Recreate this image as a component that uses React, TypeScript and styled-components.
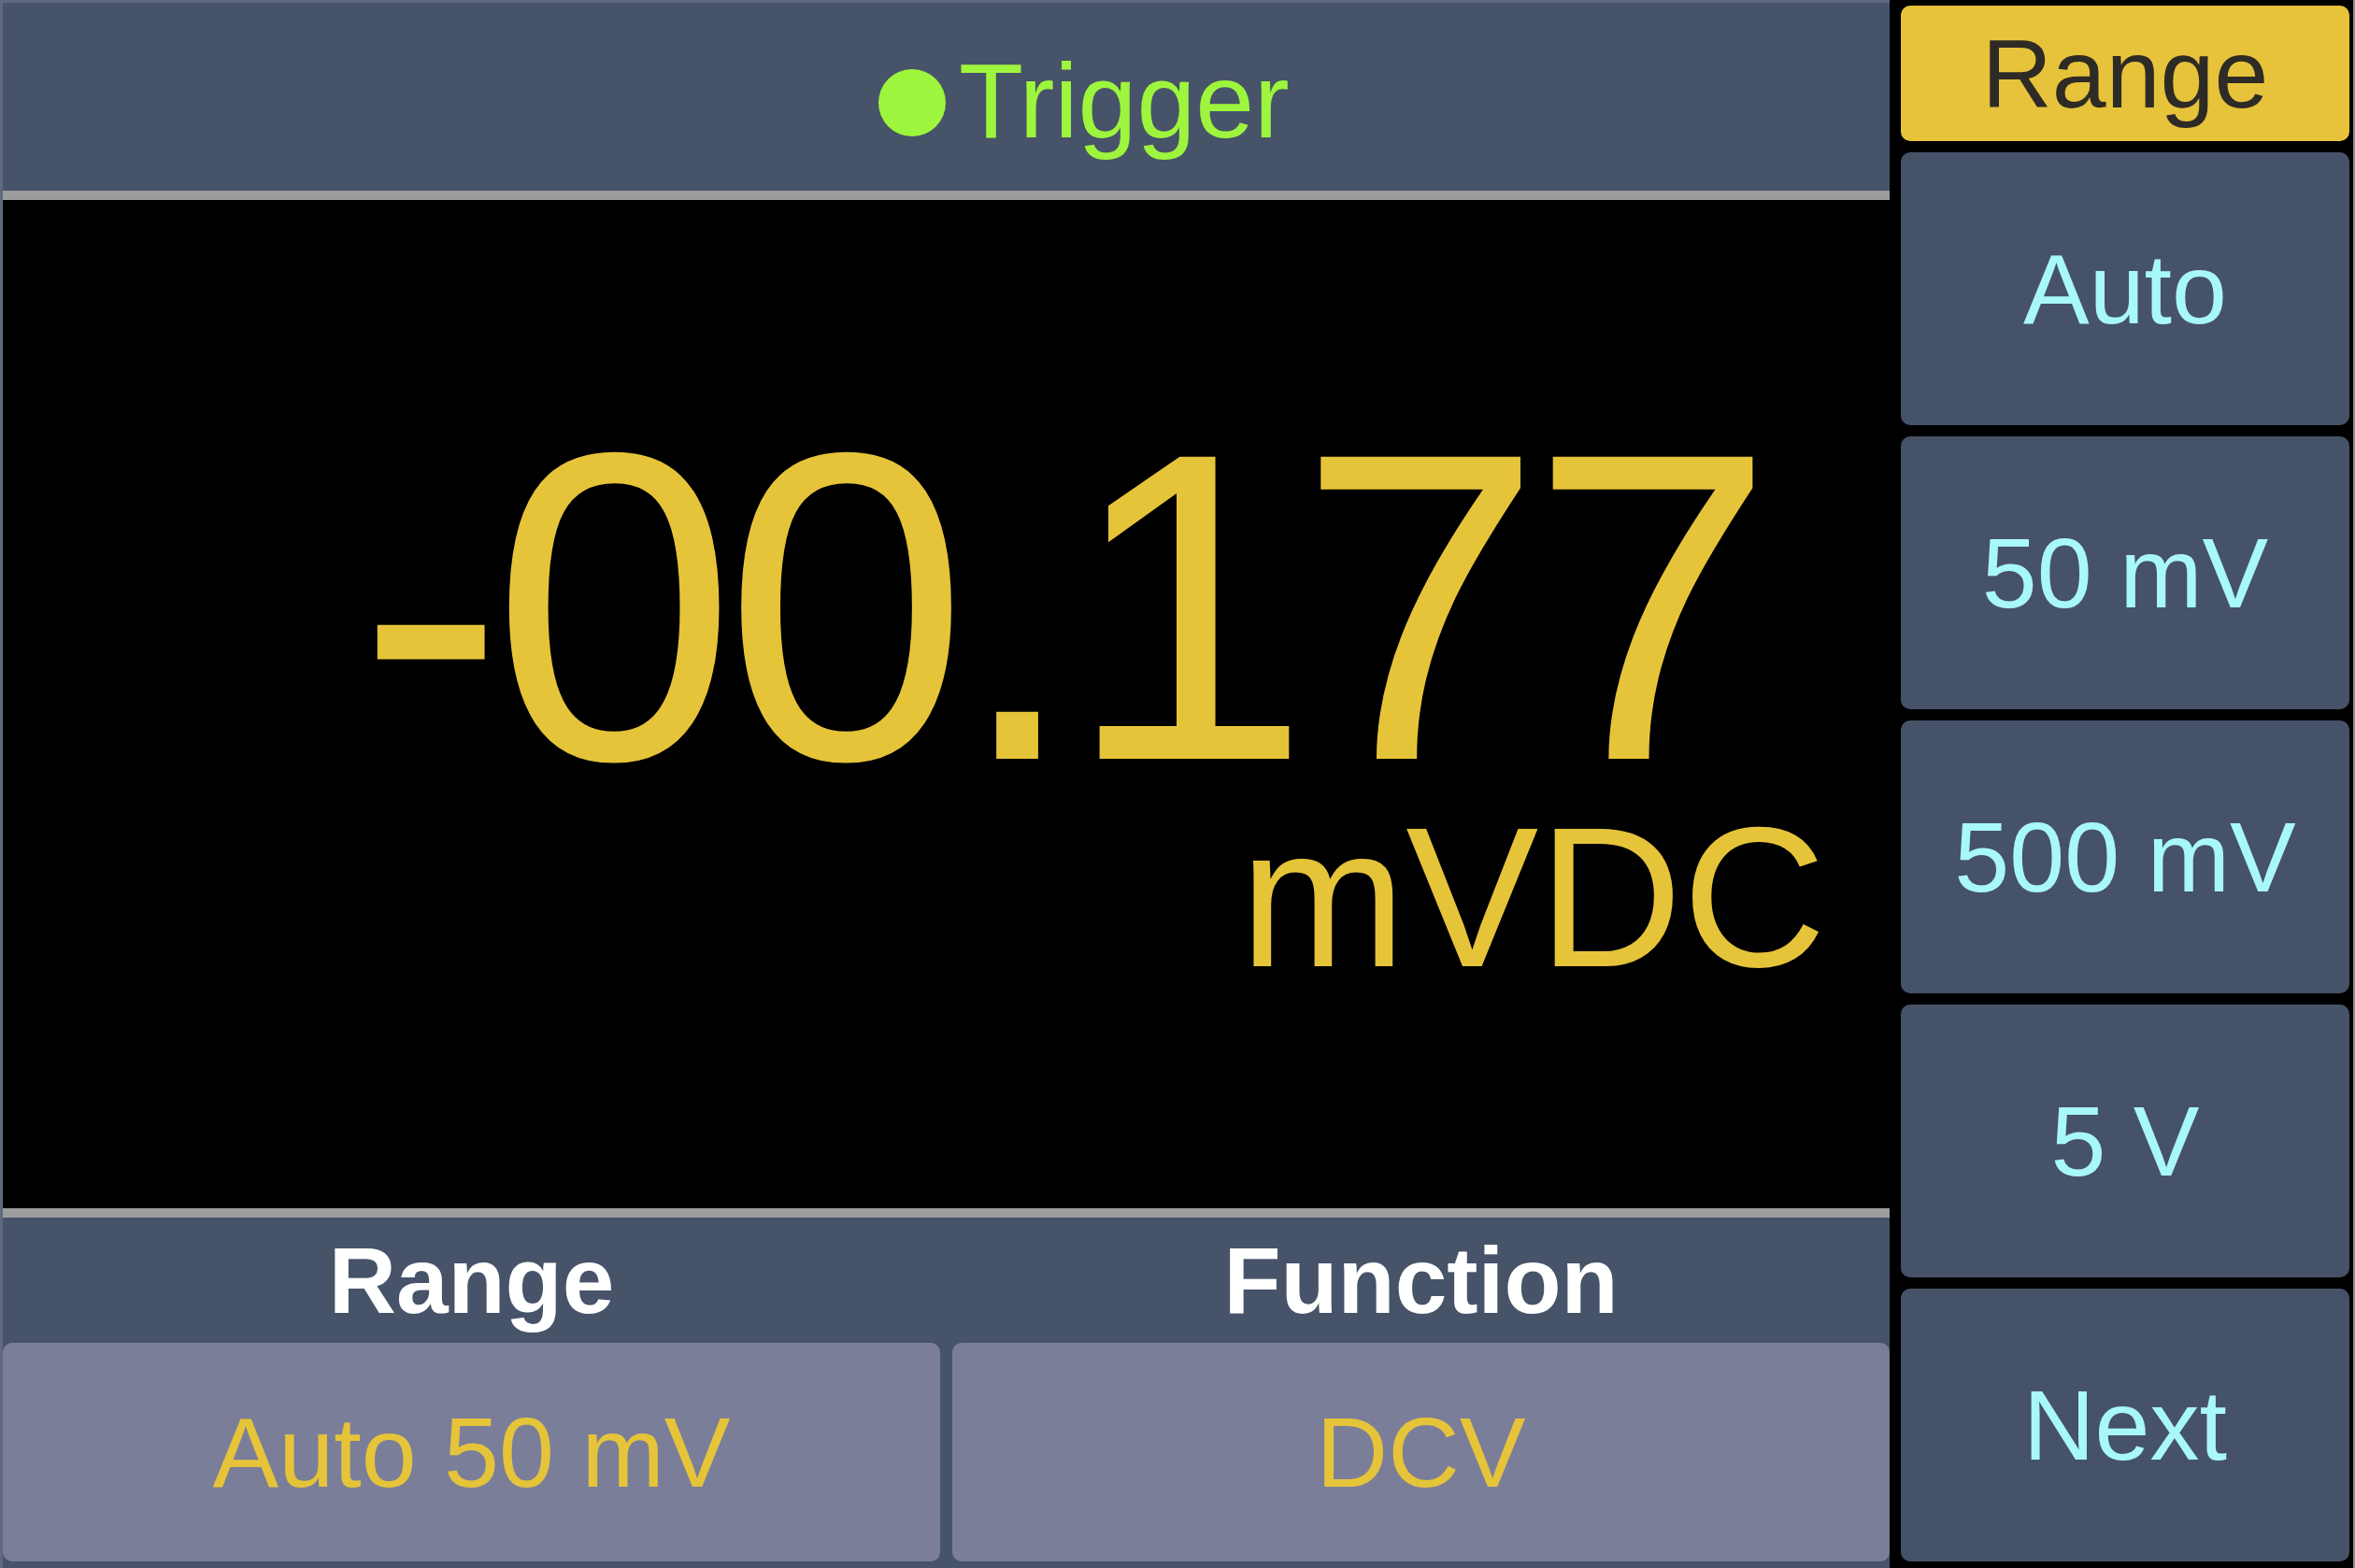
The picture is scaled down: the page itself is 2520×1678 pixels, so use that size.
import React from "react";
import styled, { createGlobalStyle } from "styled-components";

const Global = createGlobalStyle`
  html, body { margin: 0; padding: 0; background: #000; }
  body { font-family: "Liberation Sans", Arial, sans-serif; }
  * { box-sizing: border-box; }
`;

const Screen = styled.div`
  width: 2520px;
  height: 1678px;
  display: grid;
  grid-template-columns: 2022px 1fr;
  background: #000;
  overflow: hidden;
  font-family: "Liberation Sans", Arial, sans-serif;
`;

const MainPanel = styled.div`
  display: flex;
  flex-direction: column;
  height: 1678px;
  border-left: 3px solid #5f6a7e;
  border-top: 3px solid #5f6a7e;
`;

const TopBar = styled.div`
  height: 201px;
  background: #475369;
  display: flex;
  align-items: center;
  padding-left: 937px;
  padding-top: 10px;
  gap: 14px;
  color: #9ef53d;
  font-size: 113px;
  line-height: 1;
`;

const Dot = styled.span`
  width: 72px;
  height: 72px;
  border-radius: 50%;
  background: #9ef53d;
  flex: none;
  margin-top: 4px;
`;

const Separator = styled.div`
  height: 10px;
  background: #9c9c9c;
  flex: none;
`;

const Display = styled.div`
  height: 1080px;
  background: #000;
  display: flex;
  flex-direction: column;
  align-items: flex-end;
  padding-top: 248px;
  color: #e6c43a;
`;

const Reading = styled.div`
  font-size: 470px;
  line-height: 0.8;
  letter-spacing: -13px;
  margin-right: 136px;
  white-space: nowrap;
`;

const Unit = styled.div`
  font-size: 213px;
  line-height: 1;
  margin-top: 16px;
  margin-right: 68px;
`;

const Bottom = styled.div`
  flex: 1;
  background: #475369;
  display: grid;
  grid-template-columns: 1fr 1fr;
  grid-template-rows: 134px 234px;
  column-gap: 13px;
  padding-bottom: 7px;
`;

const Label = styled.div`
  display: flex;
  align-items: center;
  justify-content: center;
  color: #ffffff;
  font-weight: 700;
  font-size: 100px;
  line-height: 1;
`;

const ValueBox = styled.div`
  background: #7b7e99;
  border-radius: 10px;
  display: flex;
  align-items: center;
  justify-content: center;
  color: #e6c43a;
  font-size: 106px;
  line-height: 1;
`;

const SideColumn = styled.div`
  display: flex;
  flex-direction: column;
  gap: 12px;
  padding: 6px 4px 7px 12px;
  background: #000;
  border-right: 2px solid #8c8f97;
`;

const SoftKey = styled.div<{ $active?: boolean }>`
  flex: ${(p) => (p.$active ? "0 0 145px" : "1 1 0")};
  border-radius: 10px;
  background: ${(p) => (p.$active ? "#e6c33a" : "#465268")};
  color: ${(p) => (p.$active ? "#2e2a25" : "#a8f8f8")};
  display: flex;
  align-items: center;
  justify-content: center;
  font-size: ${(p) => (p.$active ? "104px" : "106px")};
  line-height: 1;
  white-space: nowrap;
`;

const keys = ["Auto", "50 mV", "500 mV", "5 V", "Next"];

export default function App() {
  return (
    <>
      <Global />
      <Screen>
        <MainPanel>
          <TopBar>
            <Dot />
            <span>Trigger</span>
          </TopBar>
          <Separator />
          <Display>
            <Reading>-00.177</Reading>
            <Unit>mVDC</Unit>
          </Display>
          <Separator />
          <Bottom>
            <Label>Range</Label>
            <Label>Function</Label>
            <ValueBox>Auto 50 mV</ValueBox>
            <ValueBox>DCV</ValueBox>
          </Bottom>
        </MainPanel>
        <SideColumn>
          <SoftKey $active>Range</SoftKey>
          {keys.map((k) => (
            <SoftKey key={k}>{k}</SoftKey>
          ))}
        </SideColumn>
      </Screen>
    </>
  );
}
